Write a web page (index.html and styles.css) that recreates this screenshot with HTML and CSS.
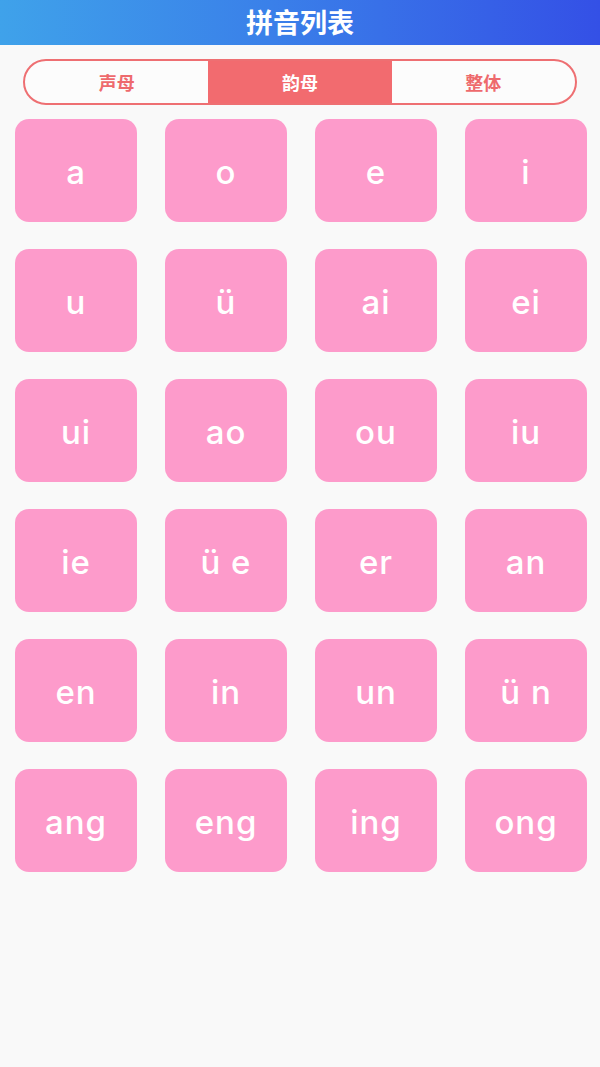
FILE: index.html
```html
<!DOCTYPE html>
<html lang="zh">
<head>
<meta charset="utf-8">
<title>拼音列表</title>
<link rel="stylesheet" href="styles.css">
</head>
<body>
<header class="topbar"><h1 class="title">拼音列表</h1></header>
<nav class="tabs">
  <div class="tab">声母</div>
  <div class="tab active">韵母</div>
  <div class="tab">整体</div>
</nav>
<main class="grid">
  <div class="card">a</div><div class="card">o</div><div class="card">e</div><div class="card">i</div>
  <div class="card">u</div><div class="card">ü</div><div class="card">ai</div><div class="card">ei</div>
  <div class="card">ui</div><div class="card">ao</div><div class="card">ou</div><div class="card">iu</div>
  <div class="card">ie</div><div class="card">ü e</div><div class="card">er</div><div class="card">an</div>
  <div class="card">en</div><div class="card">in</div><div class="card">un</div><div class="card">ü n</div>
  <div class="card">ang</div><div class="card">eng</div><div class="card">ing</div><div class="card">ong</div>
</main>
</body>
</html>
```
FILE: styles.css
```css
html, body {
  margin: 0;
  padding: 0;
  background: #f9f9f9;
  font-family: "Noto Sans CJK SC", "Noto Sans", sans-serif;
}
.topbar {
  height: 45px;
  background: linear-gradient(90deg, #3fa2ea 0%, #3a80e9 45%, #3450e6 100%);
  display: flex;
  align-items: center;
  justify-content: center;
}
.title {
  margin: 0 0 2px 0;
  color: #ffffff;
  font-size: 27px;
  font-weight: 700;
  line-height: 1;
}
.tabs {
  margin: 14px 23px 0 23px;
  height: 46px;
  box-sizing: border-box;
  border: 2px solid #ee6f72;
  border-radius: 23px;
  overflow: hidden;
  display: flex;
  background: #fcfcfc;
}
.tab {
  flex: 1;
  display: flex;
  align-items: center;
  justify-content: center;
  color: #ee6a6d;
  font-size: 18px;
  font-weight: 700;
  padding-bottom: 1px;
}
.tab.active {
  background: #f26b6f;
  color: #ffffff;
}
.grid {
  margin-top: 14px;
  padding: 0 13px 0 15px;
  display: grid;
  grid-template-columns: repeat(4, 122px);
  grid-auto-rows: 103px;
  column-gap: 28px;
  row-gap: 27px;
}
.card {
  background: #fd9bcb;
  border-radius: 14px;
  display: flex;
  align-items: center;
  justify-content: center;
  color: #ffffff;
  font-family: Inter, "Noto Sans", sans-serif;
  font-size: 33px;
  font-weight: 500;
  letter-spacing: 1px;
  white-space: pre;
  padding-top: 3px;
  box-sizing: border-box;
}
```
